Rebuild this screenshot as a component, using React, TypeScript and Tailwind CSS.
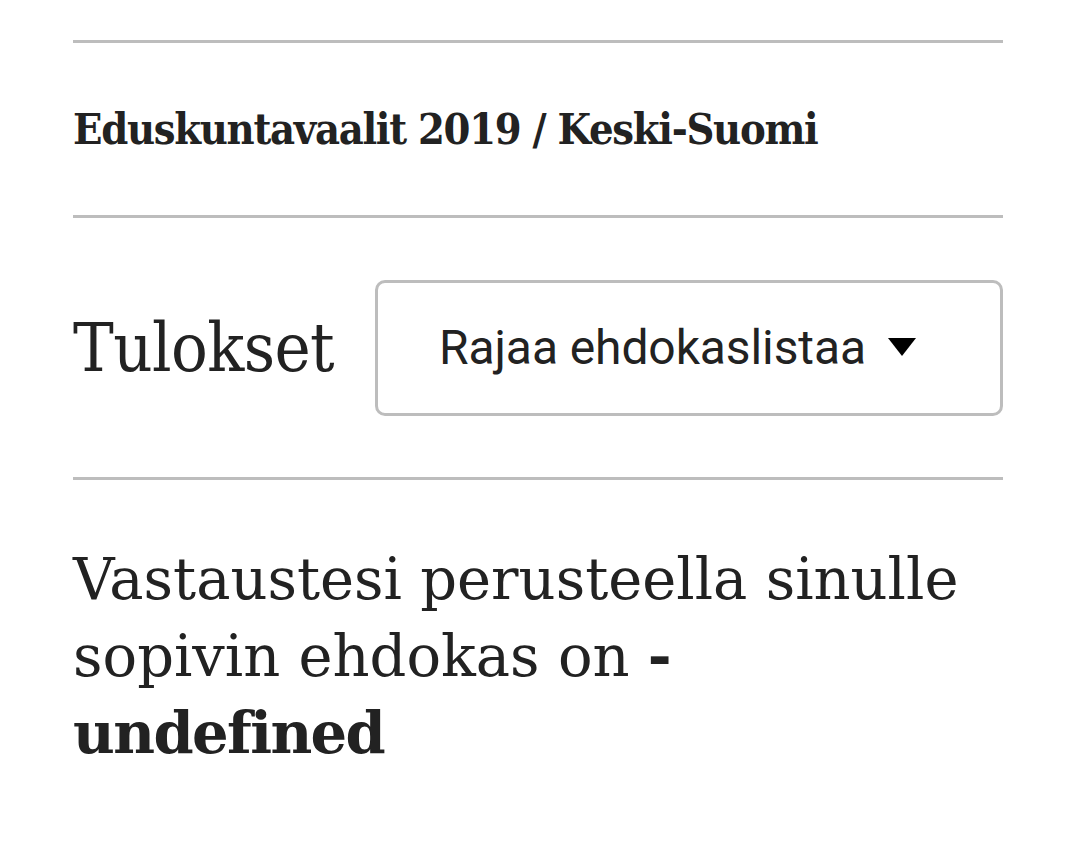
export default function App() {
  return (
    <div className="min-h-[844px] w-full bg-white text-[#222]">
      <div className="ml-[73px] w-[930px] pt-[40px]">
        <div className="h-[3px] bg-[#bdbdbd]" />
        <div className="flex h-[172px] items-center">
          <h2
            className="mt-[1px] text-[43px] font-bold leading-none tracking-[-1.3px] [font-stretch:condensed]"
            style={{ fontFamily: '"DejaVu Serif", serif' }}
          >
            Eduskuntavaalit 2019 / Keski-Suomi
          </h2>
        </div>
        <div className="h-[3px] bg-[#bdbdbd]" />
        <div className="flex h-[259px] items-center gap-[41px]">
          <h1
            className="text-[68px] leading-none tracking-[-0.6px] [font-stretch:condensed]"
            style={{ fontFamily: '"DejaVu Serif", serif' }}
          >
            Tulokset
          </h1>
          <button
            type="button"
            className="flex h-[136px] flex-1 items-center gap-[22px] rounded-[10px] border-[3px] border-[#bdbdbd] bg-white pl-[61px] text-[48px] tracking-[-0.1px] text-[#222]"
            style={{ fontFamily: 'Roboto, sans-serif' }}
          >
            <span>Rajaa ehdokaslistaa</span>
            <svg width="28" height="18" viewBox="0 0 28 18" className="-mt-[1px]">
              <path d="M0 0 L28 0 L14 18 Z" fill="#000" />
            </svg>
          </button>
        </div>
        <div className="h-[3px] bg-[#bdbdbd]" />
        <div
          className="pt-[61px] text-[57.5px] leading-[77px]"
          style={{ fontFamily: '"DejaVu Serif", serif' }}
        >
          <p>Vastaustesi perusteella sinulle</p>
          <p>
            sopivin ehdokas on <b className="font-bold">-</b>
          </p>
          <p className="font-bold tracking-[-1.6px]">undefined</p>
        </div>
      </div>
    </div>
  );
}
